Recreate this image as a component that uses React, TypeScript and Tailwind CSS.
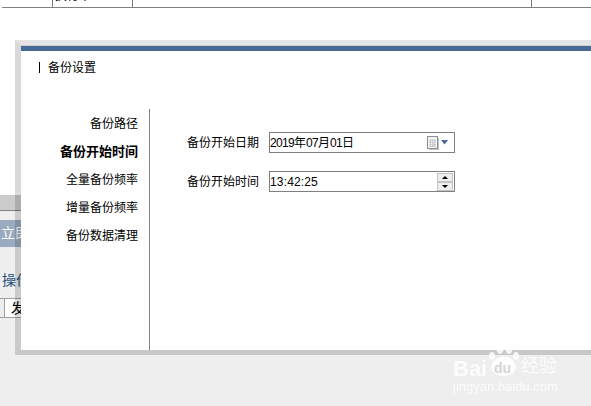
const FONT = "font-['Liberation_Sans','Noto_Sans_CJK_SC',sans-serif]";

const MENU = [
  { label: "备份路径" },
  { label: "备份开始时间", active: true },
  { label: "全量备份频率" },
  { label: "增量备份频率" },
  { label: "备份数据清理" },
];

function BackgroundPage(): React.ReactElement {
  return (
    <div className="flex h-[406px] flex-col bg-white">
      {/* Cut-off table row on top */}
      <div className="ml-[2px] flex h-[8px] border-b border-[#808080] text-[12px] leading-[8px]">
        <div className="w-[50px]" />
        <div className="w-[80px] overflow-hidden border-l border-[#808080] pl-[2px]">
          <span className="relative top-[-8px]">执行中</span>
        </div>
        <div className="w-[400px] border-x border-[#808080]" />
      </div>
      <div className="h-[187px]" />
      <div className="flex flex-1 flex-col bg-[#eeeeee]">
        <div className="h-[15px] border-b border-[#808080] bg-[#cccccc] box-content" />
        <div className="mt-[9px] flex h-[27px] items-center bg-[#9babbf] pl-[1px] text-[14px] text-white">立即</div>
        <div className="mt-[24px] pl-[2px] text-[14px] leading-[18px] text-[#1f4e79]">操作</div>
        <div className="mt-[9px] flex h-[20px] border-y border-[#a0a0a0] bg-white text-[14px] leading-[18px]">
          <div className="w-[4px] border-r border-[#a0a0a0] bg-[#eeeeee] box-content" />
          <div className="pl-[6px]">发</div>
        </div>
      </div>
    </div>
  );
}

function DateField(): React.ReactElement {
  return (
    <div className="flex h-[21px] w-[186px] items-center justify-between border border-[#808080] bg-white pr-[6px]">
      <span className="text-[12px]">
        <span className="tracking-[-0.67px]">2019</span>年<span className="tracking-[-0.67px]">07</span>月
        <span className="tracking-[-0.67px]">01</span>日
      </span>
      <div className="flex items-center gap-[2px]">
        <svg width="12" height="14" viewBox="0 0 12 14">
          <rect x="2" y="2" width="10" height="12" fill="#c4c4c4" />
          <rect x="0.5" y="0.5" width="10" height="12" fill="#f2f3f5" stroke="#8f8f8f" />
          <path d="M2 4.5h7M2 6.5h7M2 8.5h7M2 10.5h7M3.5 3v8M5.5 3v8M7.5 3v8" stroke="#c9cdd3" strokeWidth="1" />
        </svg>
        <svg width="7" height="5" viewBox="0 0 7 5">
          <path d="M0 0h7L3.5 4.5z" fill="#4a6a94" />
        </svg>
      </div>
    </div>
  );
}

function TimeField(): React.ReactElement {
  return (
    <div className="flex h-[21px] w-[186px] items-center justify-between border border-[#808080] bg-white pr-[1px]">
      <span className="text-[12px] tracking-[0.15px]">13:42:25</span>
      <div className="flex flex-col">
        <div className="flex h-[9px] w-[16px] items-center justify-center border border-[#c4c4c4] bg-[#eeeeee]">
          <svg width="6" height="3" viewBox="0 0 6 3">
            <path d="M3 0L6 3H0z" fill="#000" />
          </svg>
        </div>
        <div className="flex h-[9px] w-[16px] items-center justify-center border border-[#c4c4c4] bg-[#eeeeee]">
          <svg width="6" height="3" viewBox="0 0 6 3">
            <path d="M0 0h6L3 3z" fill="#000" />
          </svg>
        </div>
      </div>
    </div>
  );
}

function SettingsDialog(): React.ReactElement {
  return (
    <div className="absolute left-[15px] top-[40px] h-[315px] w-[576px] border-t-[5px] border-b-[5px] border-l-[6px] border-t-[#e4e4e4] border-b-[#c8c8c8] border-l-black/15 bg-white bg-clip-padding">
      <div className="h-px bg-[#cfcfcf]" />
      <div className="h-[5px] bg-[#466a94]" />
      <div className="flex h-[33px] items-center pl-[18px] text-[12px] text-black">
        <div className="mr-[8px] h-[11px] w-px bg-black" />
        备份设置
      </div>
      <div className="mt-[25px] flex">
        <ul className="flex h-[236px] w-[128px] flex-col gap-[8px] border-r border-[#808080] pt-[5px] text-right text-[12px] box-content">
          {MENU.map((item) => (
            <li
              key={item.label}
              className={item.active ? "h-[20px] pr-[11px] text-[13px] leading-[20px] font-bold" : "h-[20px] pr-[11px] leading-[20px]"}
            >
              {item.label}
            </li>
          ))}
        </ul>
        <div className="flex flex-col gap-[18px] pl-[37px] pt-[23px] text-[12px]">
          <div className="flex items-center gap-[10px]">
            <span>备份开始日期</span>
            <DateField />
          </div>
          <div className="flex items-center gap-[10px]">
            <span>备份开始时间</span>
            <TimeField />
          </div>
        </div>
      </div>
    </div>
  );
}

function Watermark(): React.ReactElement {
  return (
    <div className="absolute left-[453px] top-[342px] h-[52px] w-[106px] text-white/80 blur-[0.4px]">
      <svg className="absolute left-[36px] top-[1px]" width="30" height="34" viewBox="0 0 30 34" fill="#ffffff" fillOpacity="0.8">
        <ellipse cx="11" cy="6" rx="3.5" ry="5" />
        <ellipse cx="20" cy="6" rx="3.5" ry="5" />
        <ellipse cx="3" cy="13" rx="3" ry="4" />
        <ellipse cx="27" cy="13" rx="3" ry="4" />
        <path d="M15 13c6 0 12 6 12 11s-5 9-12 9-13-4-13-9 7-11 13-11z" />
      </svg>
      <span className="absolute left-0 top-[16px] text-[22px] leading-[21px] font-bold">Bai</span>
      <span className="absolute left-[41px] top-[19px] text-[14px] leading-[14px] font-bold text-[#d4d4d4]">du</span>
      <span className="absolute left-[68px] top-[14px] text-[18px] leading-[20px]">经验</span>
      <span className="absolute left-0 top-[38px] text-[13px] leading-[14px] whitespace-nowrap">jingyan.baidu.com</span>
    </div>
  );
}

export default function App(): React.ReactElement {
  return (
    <div className={`relative h-[406px] w-[591px] overflow-hidden text-black ${FONT}`}>
      <BackgroundPage />
      <SettingsDialog />
      <Watermark />
    </div>
  );
}
